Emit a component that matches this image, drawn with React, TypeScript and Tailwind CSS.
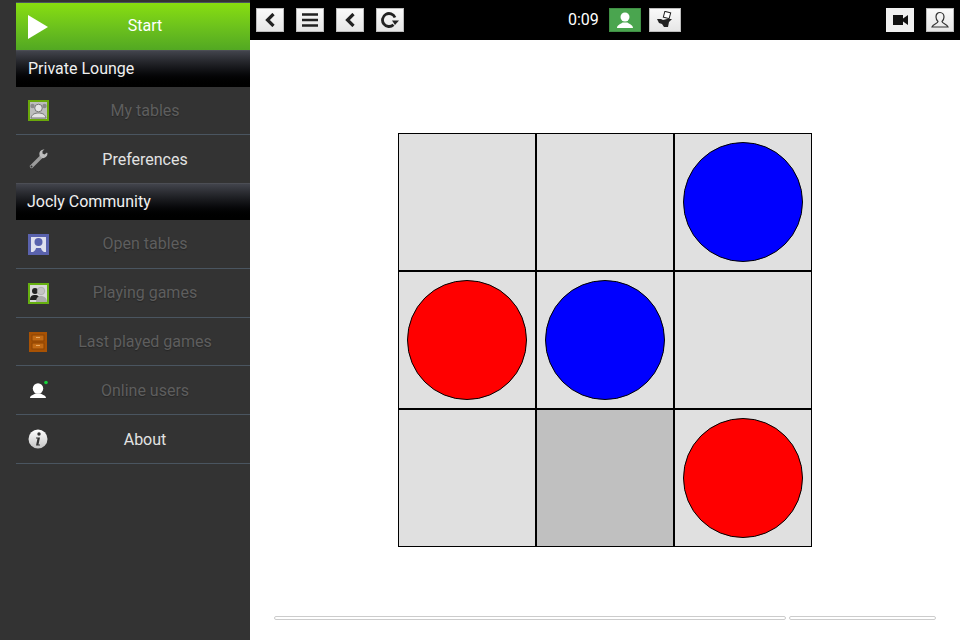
import React from 'react';

const FONT = 'font-["Roboto",sans-serif]';

const Frame: React.FC<{ bg: string; children: React.ReactNode }> = ({ bg, children }) => (
  <svg width="21" height="21" viewBox="0 0 21 21" className="block shrink-0">
    <rect width="21" height="21" fill={bg} />
    {children}
  </svg>
);

const MyTablesIcon = () => (
  <Frame bg="#6aa80a">
    <rect x="2" y="2" width="17" height="17" fill="#bdbdbd" />
    <circle cx="4.500" cy="6" r="2.200" fill="#8a8a8a" />
    <circle cx="16.500" cy="6" r="2.200" fill="#8a8a8a" />
    <circle cx="10.500" cy="8" r="3.800" fill="#e4e4e4" stroke="#777" />
    <path d="M3 18c1-4 4-5 7.500-5s6.500 1 7.500 5z" fill="#e4e4e4" stroke="#777" />
  </Frame>
);

const OpenTablesIcon = () => (
  <Frame bg="#5a62ad">
    <rect x="3" y="3" width="15" height="15" fill="#dfe0ee" />
    <circle cx="10.500" cy="8" r="4" fill="#5a62ad" />
    <path d="M5 18c1.500-1 3-2.500 3-4h5c0 1.500 1.500 3 3 4z" fill="#5a62ad" />
  </Frame>
);

const PlayingIcon = () => (
  <Frame bg="#66b010">
    <rect x="2" y="2" width="17" height="17" fill="#d8d8d8" />
    <circle cx="7" cy="8" r="3" fill="#222" />
    <path d="M2 17c0-4 2-5 5-5s5 2 5 5z" fill="#222" />
    <circle cx="13" cy="8" r="3.800" fill="#c4c4c4" stroke="#999" strokeWidth="0.500" />
    <path d="M8 19c0-4 2-6 5-6s6 2 6 6z" fill="#ababab" />
  </Frame>
);

const CabinetIcon = () => (
  <svg width="18" height="20" viewBox="0 0 18 20" className="ml-[1px] block shrink-0">
    <rect width="18" height="20" fill="#a85204" />
    <rect x="3" y="3" width="12" height="6" fill="#c26a14" stroke="#8a4303" />
    <rect x="3" y="11" width="12" height="6" fill="#c26a14" stroke="#8a4303" />
    <rect x="7" y="5" width="4" height="1" fill="#e8a860" />
    <rect x="7" y="13" width="4" height="1" fill="#e8a860" />
  </svg>
);

const WrenchIcon = () => (
  <svg width="21" height="21" viewBox="0 0 21 21" className="mt-[2px] block shrink-0">
    <path d="M3.500 17.500 13 8" stroke="#9c9c9c" strokeWidth="3.400" strokeLinecap="round" />
    <circle cx="3.500" cy="17.500" r="1" fill="#333" />
    <path d="M16 0.500a4.500 4.500 0 0 0-4.500 6l2.500 2.500a4.500 4.500 0 0 0 5.500-4.500l-.5-1-2.500 2-2-1 0-2.500 2-1.500z" fill="#bdbdbd" />
  </svg>
);

const OnlineIcon = () => (
  <svg width="21" height="21" viewBox="0 0 21 21" className="block shrink-0">
    <circle cx="10" cy="8.500" r="5.200" fill="#fff" />
    <path d="M2 18c0-2.500 3-3 5.500-4.500h5C15 15 18 15.500 18 18z" fill="#fff" />
    <circle cx="18" cy="2.500" r="1.800" fill="#16d43a" />
  </svg>
);

const InfoIcon = () => (
  <svg width="21" height="21" viewBox="0 0 21 21" className="block shrink-0">
    <defs>
      <linearGradient id="info-fill" x1="0" y1="0" x2="0" y2="1">
        <stop offset="0" stopColor="#ffffff" />
        <stop offset="1" stopColor="#c4c4c4" />
      </linearGradient>
    </defs>
    <circle cx="10" cy="10" r="9.500" fill="url(#info-fill)" />
    <circle cx="11" cy="5" r="1.700" fill="#333" />
    <path d="M8 8.500h4l-1.500 7H12v1H8l1.500-7H8z" fill="#333" />
  </svg>
);

const menu = [
  { type: 'head', label: 'Private Lounge', pad: 'pl-3' },
  { label: 'My tables', icon: <MyTablesIcon />, dim: true, h: 'h-[48px]' },
  { label: 'Preferences', icon: <WrenchIcon />, h: 'h-[48px] border-transparent', nudge: 'pt-[2px]' },
  { type: 'head', label: 'Jocly Community', pad: 'pl-[11px]' },
  { label: 'Open tables', icon: <OpenTablesIcon />, dim: true, h: 'h-[49px]' },
  { label: 'Playing games', icon: <PlayingIcon />, dim: true, h: 'h-[49px]' },
  { label: 'Last played games', icon: <CabinetIcon />, dim: true, h: 'h-[48px]' },
  { label: 'Online users', icon: <OnlineIcon />, dim: true, h: 'h-[49px]', nudge: 'pt-[2px]' },
  { label: 'About', icon: <InfoIcon />, h: 'h-[49px]', nudge: 'pt-[2px]' },
];

const Sidebar: React.FC = () => (
  <aside className="h-full w-[250px] shrink-0 bg-[#333333] pl-4 pt-[2px]">
    <div className="flex h-[48px] items-center border-t border-[#4a5560] bg-gradient-to-b from-[#88de0e] to-[#52a822] pl-3">
      <div className="w-3 shrink-0">
        <svg width="20" height="24" viewBox="0 0 20 24" className="block">
          <path d="M0 0 20 12 0 24z" fill="#fff" />
        </svg>
      </div>
      <span className="flex-1 pb-px text-center text-[16px] text-white">Start</span>
    </div>
    {menu.map((item) =>
      item.type === 'head' ? (
        <div
          key={item.label}
          className={`flex h-[37px] items-center border-t border-[#4c4e55] bg-gradient-to-b from-[#42444c] to-black text-[16px] text-[#f0f0f0] ${item.pad}`}
        >
          {item.label}
        </div>
      ) : (
        <div key={item.label} className={`flex items-center border-b border-[#4a5560] pl-3 ${item.h}`}>
          <div className="w-3 shrink-0">{item.icon}</div>
          <span
            className={`flex-1 text-center text-[16px] ${item.nudge ?? ''} ${
              item.dim ? 'text-[#5e5e5e] [text-shadow:0_1px_1px_#262626]' : 'text-[#e2e2e2]'
            }`}
          >
            {item.label}
          </span>
        </div>
      ),
    )}
  </aside>
);

const ToolButton: React.FC<{ children: React.ReactNode; green?: boolean; plain?: boolean; wide?: boolean }> = ({
  children,
  green,
  plain,
  wide,
}) => (
  <div
    className={`flex h-6 items-center justify-center border ${wide || green ? 'w-8' : 'w-7'} ${
      green
        ? 'border-[#3f8f44] bg-[#4aa54f]'
        : plain
          ? 'border-[#f0f0f0] bg-[#f0f0f0]'
          : 'border-[#bcbcbc] bg-gradient-to-b from-[#fafafa] to-[#e6e6e6]'
    }`}
  >
    {children}
  </div>
);

const Toolbar: React.FC = () => (
  <header className="flex h-10 shrink-0 items-center bg-black px-[6px]">
    <div className="flex gap-3">
      <ToolButton>
        <svg width="12" height="14" viewBox="0 0 12 14"><path d="M9.500 1 3.500 7l6 6" fill="none" stroke="#222" strokeWidth="3.200" /></svg>
      </ToolButton>
      <ToolButton>
        <svg width="16" height="14" viewBox="0 0 16 14"><path d="M0 1.500h16M0 7h16M0 12.500h16" stroke="#222" strokeWidth="2.600" /></svg>
      </ToolButton>
      <ToolButton>
        <svg width="12" height="14" viewBox="0 0 12 14"><path d="M9.500 1 3.500 7l6 6" fill="none" stroke="#222" strokeWidth="3.200" /></svg>
      </ToolButton>
      <ToolButton>
        <svg width="18" height="16" viewBox="0 0 18 16">
          <path d="M14 5.500A6.500 6.500 0 1 0 12.500 12.700" fill="none" stroke="#222" strokeWidth="2.800" />
          <path d="M11 8.500h7L14 13z" fill="#222" />
        </svg>
      </ToolButton>
    </div>
    <span className="ml-[164px] w-[33px] text-[16px] text-white">0:09</span>
    <div className="ml-2 flex gap-2">
      <ToolButton green>
        <svg width="18" height="18" viewBox="0 0 18 18">
          <circle cx="9" cy="6" r="4.500" fill="#fff" />
          <path d="M1 17c0-3 3-3.500 5.500-5.500h5C14 13.500 17 14 17 17z" fill="#fff" />
        </svg>
      </ToolButton>
      <ToolButton wide>
        <svg width="18" height="18" viewBox="0 0 18 18">
          <rect x="8" y="1" width="6" height="6" fill="#fff" stroke="#222" transform="rotate(15 11 4)" />
          <path d="M1 8h4l2 1 4-1h5l-3 3-1 5H8L6 13 3 12z" fill="#222" />
        </svg>
      </ToolButton>
    </div>
    <div className="ml-auto flex gap-3">
      <ToolButton plain>
        <svg width="15" height="10" viewBox="0 0 15 10"><path d="M0 0h10v3.500L15 0v10l-5-3.500V10H0z" fill="#111" /></svg>
      </ToolButton>
      <ToolButton>
        <svg width="18" height="18" viewBox="0 0 18 18" fill="none" stroke="#333" strokeWidth="1.200">
          <path d="M9 1.500c-2.500 0-4 2-4 4.500 0 2 1 3.500 2 4.500 0 2-5 2.500-6 5.500h16c-1-3-6-3.500-6-5.500 1-1 2-2.500 2-4.500 0-2.500-1.500-4.500-4-4.500z" />
        </svg>
      </ToolButton>
    </div>
  </header>
);

// board state, row by row
const cells = ['', '', 'blue', 'red', 'blue', '', '', 'last', 'red'];

const Board: React.FC = () => (
  <div className="mx-auto grid w-[414px] grid-cols-[repeat(3,136px)] grid-rows-[repeat(3,136px)] gap-[2px] border border-black bg-black">
    {cells.map((c, i) => (
      <div key={i} className={`flex items-center justify-center ${c === 'last' ? 'bg-[#c0c0c0]' : 'bg-[#e0e0e0]'}`}>
        {c === 'blue' && <div className="h-[120px] w-[120px] rounded-full border border-black bg-[#0000ff]" />}
        {c === 'red' && <div className="h-[120px] w-[120px] rounded-full border border-black bg-[#ff0000]" />}
      </div>
    ))}
  </div>
);

export default function App() {
  return (
    <div className={`flex h-[640px] w-[960px] overflow-hidden bg-white ${FONT}`}>
      <Sidebar />
      <div className="flex min-w-0 flex-1 flex-col">
        <Toolbar />
        <main className="flex-1 pt-[93px]">
          <Board />
          <div className="mt-[69px] flex gap-[3px] pl-6">
            <div className="h-1 w-[512px] rounded-sm border border-[#cccccc] bg-white" />
            <div className="h-1 w-[147px] rounded-sm border border-[#cccccc] bg-white" />
          </div>
        </main>
      </div>
    </div>
  );
}
